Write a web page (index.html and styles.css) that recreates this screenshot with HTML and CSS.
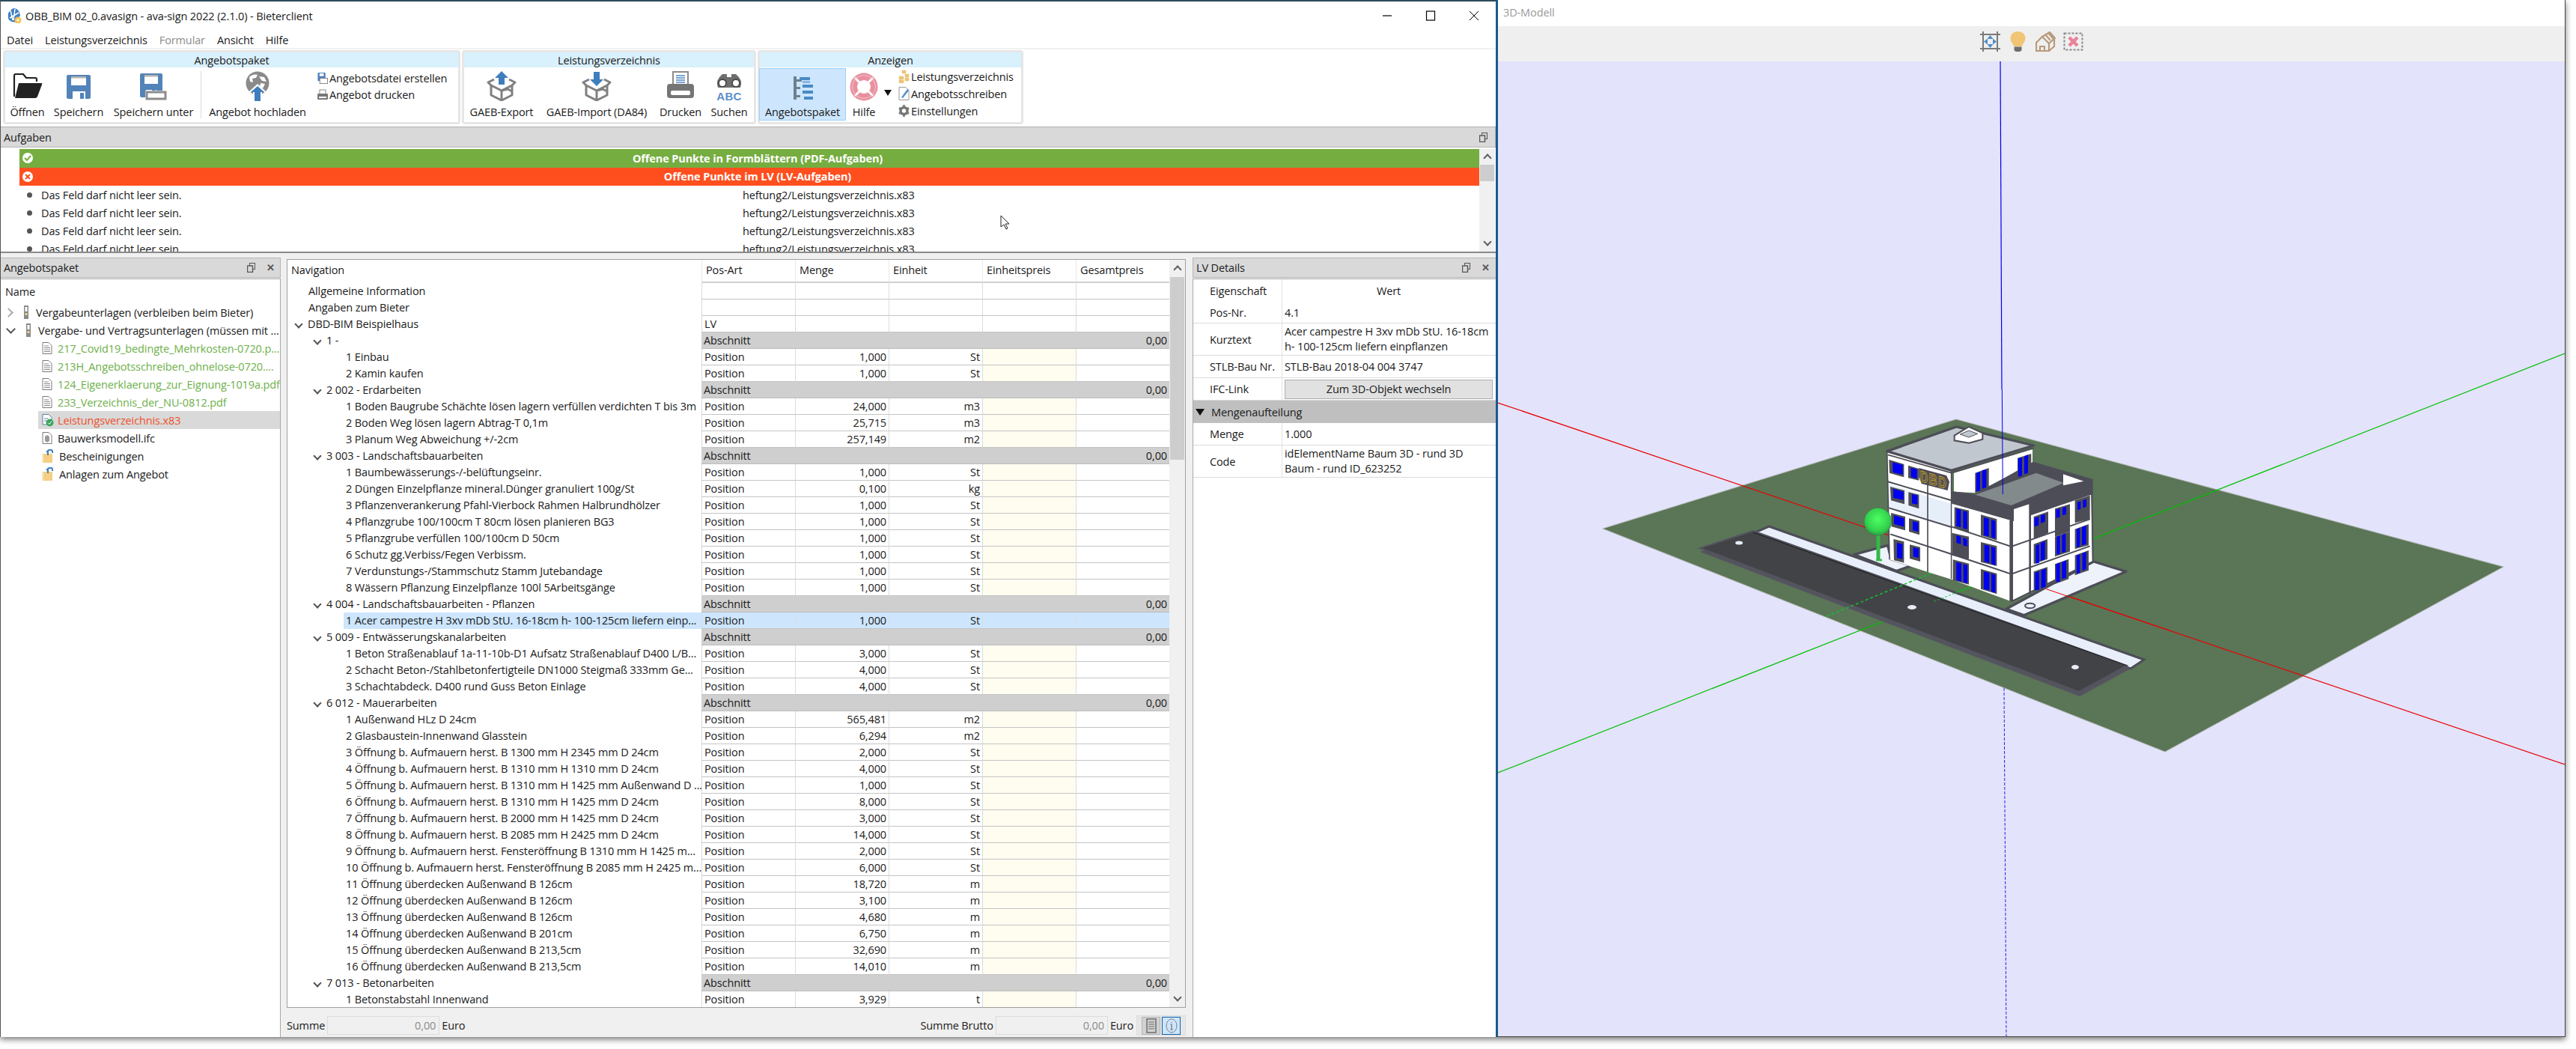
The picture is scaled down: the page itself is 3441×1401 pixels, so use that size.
FILE: index.html
```html
<!DOCTYPE html>
<html lang="de">
<head>
<meta charset="utf-8">
<title>OBB_BIM 02_0.avasign - ava-sign 2022 (2.1.0) - Bieterclient</title>
<link rel="stylesheet" href="styles.css">
</head>
<body>
<svg class="defs" width="0" height="0">
  <symbol id="save" viewBox="0 0 32 32"><path d="M2 0h28q2 0 2 2v28q0 2-2 2H2q-2 0-2-2V2q0-2 2-2z" fill="#5283b9"/><rect x="6" y="2" width="20" height="12" fill="#fff"/><rect x="6" y="2" width="20" height="2.5" fill="#b3b3b3"/><rect x="8" y="22" width="17" height="10" fill="#fff"/><rect x="18" y="24" width="5" height="8" fill="#5283b9"/></symbol>
  <symbol id="saveas" viewBox="0 0 36 36"><path d="M2 0h26q2 0 2 2v28q0 2-2 2H2q-2 0-2-2V2q0-2 2-2z" fill="#5283b9"/><rect x="6" y="2" width="18" height="12" fill="#fff"/><rect x="6" y="2" width="18" height="2.5" fill="#b3b3b3"/><rect x="8" y="22" width="14" height="10" fill="#fff"/><rect x="16" y="22" width="5" height="3" fill="#5283b9"/><rect x="7" y="23" width="29" height="13" fill="#fff"/><rect x="9" y="25" width="25" height="9" fill="#fff" stroke="#8c8c8c" stroke-width="3"/></symbol>
  <symbol id="box" viewBox="0 0 40 40"><g fill="none" stroke="#808080" stroke-width="3" stroke-linejoin="round"><path d="M6 19l14 7 14-7v13l-14 7-14-7z"/><path d="M20 26v13M6 19l-4-4 8-4M34 19l4-4-8-4M20 26l8-2 6 3"/></g></symbol>
  <symbol id="print" viewBox="0 0 38 38"><rect x="9" y="1" width="20" height="20" fill="#fff" stroke="#8c8c8c" stroke-width="2"/><path d="M13 6h12M13 9h12M13 12h12M13 15h12" stroke="#4d86c1" stroke-width="1.5"/><rect x="1" y="17" width="36" height="19" rx="4" fill="#757575"/><rect x="6" y="26" width="26" height="6" rx="2" fill="#fff"/></symbol>
  <symbol id="pdoc" viewBox="0 0 14 16"><path d="M1 .5h8l4 4V15.500H1z" fill="#fff" stroke="#7a7a7a"/><path d="M3 5h6M3 7.500h8M3 10h8M3 12.500h8" stroke="#8a8a8a"/></symbol>
  <symbol id="fold" viewBox="0 0 16 18"><path d="M0 6h6l1-2v2h7v12H0z" fill="#f5cf86"/><path d="M0 6v12h2V7z" fill="#fbe7bd"/><path d="M8 8V3q0-2 2-2h2q2 0 2 2v2" fill="none" stroke="#3f7ec0" stroke-width="2"/><path d="M5 3l4-2v5z" fill="#3f7ec0"/></symbol>
  <symbol id="bar" viewBox="0 0 8 18"><rect x="1" y="0" width="6" height="18" fill="#8a8a8a"/><rect x="2.500" y="2" width="3" height="6" fill="#fff"/><rect x="2.500" y="10" width="3" height="3" fill="#e7d58a"/></symbol>
  <symbol id="ssave" viewBox="0 0 14 16"><rect x="0" y="0" width="11" height="12" rx="1" fill="#4f81bd"/><rect x="2.500" y="1" width="6" height="4" fill="#fff"/><rect x="3" y="8" width="11" height="7.500" fill="#fff" stroke="#808080"/></symbol>
  <symbol id="undock" viewBox="0 0 11 13"><rect x="3.500" y=".5" width="7" height="8" fill="none" stroke="#555"/><rect x=".5" y="4" width="7" height="8.500" fill="#d9d9d9" stroke="#555" stroke-width="1.400"/></symbol>
</svg>
<div class="window">
  <div class="app">
    <header class="titlebar">
      <svg class="appicon" viewBox="0 0 20 20"><path d="M2 14Q0 4 9 0q7 0 9 9l-4 9q-8 2-12-4z" fill="#3f7fc4"/><path d="M5 3l3 13M11 1l-2 15M16 6L4 13" stroke="#fff" stroke-width="1.500"/><circle cx="15" cy="16" r="4.500" fill="#f2c14a"/><path d="M15 13.500v5M12.500 16h5" stroke="#fff"/></svg>
      <span class="title">OBB_BIM 02_0.avasign - ava-sign 2022 (2.1.0) - Bieterclient</span>
      <div class="winctl">
        <span class="wc"><svg width="14" height="14" viewBox="0 0 14 14"><path d="M1 7h12" stroke="#000" stroke-width="1.200"/></svg></span>
        <span class="wc"><svg width="14" height="14" viewBox="0 0 14 14"><rect x="1.500" y="1" width="11" height="12" fill="none" stroke="#000" stroke-width="1.200"/></svg></span>
        <span class="wc"><svg width="14" height="14" viewBox="0 0 14 14"><path d="M1 1l12 12M13 1L1 13" stroke="#000" stroke-width="1"/></svg></span>
      </div>
    </header>
    <nav class="menubar"><span>Datei</span><span>Leistungsverzeichnis</span><span class="off">Formular</span><span>Ansicht</span><span>Hilfe</span></nav>
    <section class="ribbon">
      <div class="group g1">
        <div class="ghead">Angebotspaket</div>
        <div class="gbody">
          <div class="btn w-open">
            <svg class="ic" width="40" height="34" viewBox="0 0 40 34"><path d="M2 31V3q0-2 2-2h10l4 5h12q2 0 2 2v3" fill="none" stroke="#222" stroke-width="2.200"/><path d="M8 13h30q2 0 1 2l-6 16q-1 2-3 2H3z" fill="#222"/></svg>
            <span>Öffnen</span>
          </div>
          <div class="btn w-save"><svg class="ic" width="32" height="32"><use href="#save"/></svg><span>Speichern</span></div>
          <div class="btn w-saveas"><svg class="ic" width="36" height="36"><use href="#saveas"/></svg><span>Speichern unter</span></div>
          <div class="sep"></div>
          <div class="btn w-upload">
            <svg class="ic" width="34" height="40" viewBox="0 0 34 40"><circle cx="17" cy="16" r="15.500" fill="#8a8a8a"/><path d="M6 8q5-5 11-3l-2 4-5 1 1 5-4-1zM19 7l7 1 3 6-6-1zM21 16l6 1-3 6-4-2z" fill="#fff"/><path d="M17 17l12 11h-6v12H11V28H5z" fill="#fff"/><path d="M17 20l9 8h-5v12h-8V28H8z" fill="#3f7ebc"/></svg>
            <span>Angebot hochladen</span>
          </div>
          <div class="small s1">
            <div class="si"><svg width="14" height="15"><use href="#ssave"/></svg><span>Angebotsdatei erstellen</span></div>
            <div class="si"><svg width="14" height="15" viewBox="0 0 14 15"><rect x="3" y="1" width="8" height="6" fill="#fff" stroke="#888"/><rect x="0" y="6" width="14" height="8" rx="1" fill="#777"/><rect x="2" y="10" width="10" height="2" fill="#fff"/></svg><span>Angebot drucken</span></div>
          </div>
        </div>
      </div>
      <div class="group g2">
        <div class="ghead">Leistungsverzeichnis</div>
        <div class="gbody">
          <div class="btn w-gexp"><svg class="ic" width="40" height="40" viewBox="0 0 40 40"><use href="#box"/><path d="M20 0l9 9h-5v9h-8V9h-5z" fill="#3f7ebc"/></svg><span>GAEB-Export</span></div>
          <div class="btn w-gimp"><svg class="ic" width="40" height="40" viewBox="0 0 40 40"><use href="#box"/><path d="M20 20l9-9h-5V1h-8v10h-5z" fill="#3f7ebc"/></svg><span>GAEB-Import (DA84)</span></div>
          <div class="btn w-druck"><svg class="ic" width="38" height="38"><use href="#print"/></svg><span>Drucken</span></div>
          <div class="btn w-such"><svg class="ic" width="38" height="40" viewBox="0 0 38 40"><path d="M4 22q-4-10 6-18h6v4h6V4h6q10 8 6 18z" fill="#6e6e6e"/><circle cx="10" cy="16" r="5" fill="#fff" stroke="#4a4a4a" stroke-width="2"/><circle cx="28" cy="16" r="5" fill="#fff" stroke="#4a4a4a" stroke-width="2"/><text x="19" y="39" class="abc">ABC</text></svg><span>Suchen</span></div>
        </div>
      </div>
      <div class="group g3">
        <div class="ghead">Anzeigen</div>
        <div class="gbody">
          <div class="btn active">
            <svg class="ic" width="30" height="32" viewBox="0 0 30 32"><path d="M3 1h4v31H3zM7 5h7v3H7zM7 15h5v3H7zM7 26h5v3H7z" fill="#6f7f8f"/><path d="M11 2h14v4H11zM15 12h14v4H15zM15 20h14v4H15zM17 28h12v4H17z" fill="#4a8ac6"/><path d="M15 7h10v3H15z" fill="#86b4de"/></svg>
            <span>Angebotspaket</span>
          </div>
          <div class="btn w-hilfe">
            <svg class="ic" width="38" height="38" viewBox="0 0 38 38"><circle cx="19" cy="19" r="18.500" fill="#e9909f"/><circle cx="19" cy="19" r="9" fill="#fff"/><path d="M7 7l7 7M31 7l-7 7M7 31l7-7M31 31l-7-7" stroke="#fff" stroke-width="3"/><circle cx="19" cy="19" r="15.500" fill="none" stroke="#f4c3cc" stroke-width="1"/></svg>
            <span>Hilfe</span>
          </div>
          <div class="caret"></div>
          <div class="small s3">
            <div class="si"><svg width="15" height="18" viewBox="0 0 15 18"><g fill="#f1c77a" stroke="#d9a953" stroke-width=".5"><rect x="5" y="1" width="5" height="4" rx="1"/><rect x="9" y="6" width="5" height="4" rx="1"/><rect x="1" y="9" width="6" height="4" rx="1"/><rect x="9" y="11" width="5" height="4" rx="1"/><rect x="1" y="14" width="6" height="4" rx="1"/></g></svg><span>Leistungsverzeichnis</span></div>
            <div class="si"><svg width="15" height="18" viewBox="0 0 15 18"><path d="M1 .5h9l4 4v13H1z" fill="#fff" stroke="#9a9a9a"/><path d="M4 14L12 3l2 2-8 10z" fill="#4f8dcb"/></svg><span>Angebotsschreiben</span></div>
            <div class="si"><svg width="15" height="18" viewBox="0 0 15 18"><circle cx="7.500" cy="9" r="4.500" fill="none" stroke="#767676" stroke-width="3.500"/><path d="M7.500 1v3M7.500 14v3M1 5l2.500 2M14 5l-2.500 2M1 13l2.500-2M14 13l-2.500-2" stroke="#767676" stroke-width="2.500"/></svg><span>Einstellungen</span></div>
          </div>
        </div>
      </div>
    </section>
    <section class="tasks">
      <div class="phead"><span>Aufgaben</span><div class="pctl"><svg class="undock" width="11" height="13"><use href="#undock"/></svg></div></div>
      <div class="tbody">
        <div class="tlist">
          <div class="bar green"><svg class="bi" width="16" height="16" viewBox="0 0 16 16"><circle cx="8" cy="8" r="7" fill="#fff"/><path d="M4 8l3 3 5-6" fill="none" stroke="#76ad41" stroke-width="2"/></svg><b>Offene Punkte in Formblättern (PDF-Aufgaben)</b></div>
          <div class="bar red"><svg class="bi" width="16" height="16" viewBox="0 0 16 16"><circle cx="8" cy="8" r="7" fill="#fff"/><path d="M5 5l6 6M11 5l-6 6" stroke="#ff4f1f" stroke-width="2"/></svg><b>Offene Punkte im LV (LV-Aufgaben)</b></div>
          <div class="task"><i></i><span class="tm">Das Feld darf nicht leer sein.</span><span>heftung2/Leistungsverzeichnis.x83</span></div>
          <div class="task"><i></i><span class="tm">Das Feld darf nicht leer sein.</span><span>heftung2/Leistungsverzeichnis.x83</span></div>
          <div class="task"><i></i><span class="tm">Das Feld darf nicht leer sein.</span><span>heftung2/Leistungsverzeichnis.x83</span></div>
          <div class="task"><i></i><span class="tm">Das Feld darf nicht leer sein.</span><span>heftung2/Leistungsverzeichnis.x83</span></div>
          <svg class="cursor" width="13" height="20" viewBox="0 0 13 20"><path d="M1 1v15l4-3 3 6 2-1-3-6h5z" fill="#fff" stroke="#222"/></svg>
        </div>
        <div class="tscroll"><span class="up"></span><span class="thumb"></span><span class="dn"></span></div>
      </div>
    </section>
    <main class="body">
      <aside class="leftp">
        <div class="phead"><span>Angebotspaket</span><div class="pctl"><svg class="undock" width="11" height="13"><use href="#undock"/></svg><span class="x">✕</span></div></div>
        <div class="tree">
          <div class="tname">Name</div>
          <div class="ti t0"><i class="chev col"></i><svg width="8" height="18"><use href="#bar"/></svg><span>Vergabeunterlagen (verbleiben beim Bieter)</span></div>
          <div class="ti t0"><i class="chev"></i><svg width="8" height="18"><use href="#bar"/></svg><span>Vergabe- und Vertragsunterlagen (müssen mit ...</span></div>
          <div class="ti t1 gn"><svg width="14" height="16"><use href="#pdoc"/></svg><span>217_Covid19_bedingte_Mehrkosten-0720.p...</span></div>
          <div class="ti t1 gn"><svg width="14" height="16"><use href="#pdoc"/></svg><span>213H_Angebotsschreiben_ohnelose-0720....</span></div>
          <div class="ti t1 gn"><svg width="14" height="16"><use href="#pdoc"/></svg><span>124_Eigenerklaerung_zur_Eignung-1019a.pdf</span></div>
          <div class="ti t1 gn"><svg width="14" height="16"><use href="#pdoc"/></svg><span>233_Verzeichnis_der_NU-0812.pdf</span></div>
          <div class="ti t1 rd"><svg width="16" height="17" viewBox="0 0 16 17"><path d="M1 .5h8l4 4V14H1z" fill="#fff" stroke="#5c7fa8"/><path d="M3 6h5M3 9h3" stroke="#5c7fa8"/><circle cx="10.500" cy="11.500" r="5" fill="#3ba55d"/><path d="M8 11.500l2 2 3-4" fill="none" stroke="#fff"/></svg><span>Leistungsverzeichnis.x83</span></div>
          <div class="ti t1"><svg width="14" height="16" viewBox="0 0 14 16"><path d="M1 .5h8l4 4v11H1z" fill="#fff" stroke="#7a7a7a"/><path d="M4 6l3-2 3 2v6l-3 2-3-2z" fill="#9a9a9a"/></svg><span>Bauwerksmodell.ifc</span></div>
          <div class="ti t1"><svg width="16" height="18"><use href="#fold"/></svg><span>Bescheinigungen</span></div>
          <div class="ti t1"><svg width="16" height="18"><use href="#fold"/></svg><span>Anlagen zum Angebot</span></div>
        </div>
      </aside>
      <section class="centerp">
        <div class="lvtable">
          <div class="lvmain">
            <div class="r hd"><div class="n">Navigation</div><div class="c">Pos-Art</div><div class="c">Menge</div><div class="c">Einheit</div><div class="c">Einheitspreis</div><div class="c">Gesamtpreis</div></div>
            <div class="r"><div class="n l0">Allgemeine Information</div><div class="c"></div><div class="c"></div><div class="c"></div><div class="c"></div><div class="c"></div></div>
            <div class="r"><div class="n l0">Angaben zum Bieter</div><div class="c"></div><div class="c"></div><div class="c"></div><div class="c"></div><div class="c"></div></div>
            <div class="r"><div class="n l0"><i class="chev"></i>DBD-BIM Beispielhaus</div><div class="c">LV</div><div class="c"></div><div class="c"></div><div class="c"></div><div class="c"></div></div>
            <div class="r sec"><div class="n l1"><i class="chev"></i>1 -</div><div class="c">Abschnitt</div><div class="c"></div><div class="c"></div><div class="c"></div><div class="c num">0,00</div></div>
            <div class="r"><div class="n l2">1 Einbau</div><div class="c">Position</div><div class="c num">1,000</div><div class="c num">St</div><div class="c price"></div><div class="c"></div></div>
            <div class="r"><div class="n l2">2 Kamin kaufen</div><div class="c">Position</div><div class="c num">1,000</div><div class="c num">St</div><div class="c price"></div><div class="c"></div></div>
            <div class="r sec"><div class="n l1"><i class="chev"></i>2 002 - Erdarbeiten</div><div class="c">Abschnitt</div><div class="c"></div><div class="c"></div><div class="c"></div><div class="c num">0,00</div></div>
            <div class="r"><div class="n l2">1 Boden Baugrube Schächte lösen lagern verfüllen verdichten T bis 3m</div><div class="c">Position</div><div class="c num">24,000</div><div class="c num">m3</div><div class="c price"></div><div class="c"></div></div>
            <div class="r"><div class="n l2">2 Boden Weg lösen lagern Abtrag-T 0,1m</div><div class="c">Position</div><div class="c num">25,715</div><div class="c num">m3</div><div class="c price"></div><div class="c"></div></div>
            <div class="r"><div class="n l2">3 Planum Weg Abweichung +/-2cm</div><div class="c">Position</div><div class="c num">257,149</div><div class="c num">m2</div><div class="c price"></div><div class="c"></div></div>
            <div class="r sec"><div class="n l1"><i class="chev"></i>3 003 - Landschaftsbauarbeiten</div><div class="c">Abschnitt</div><div class="c"></div><div class="c"></div><div class="c"></div><div class="c num">0,00</div></div>
            <div class="r"><div class="n l2">1 Baumbewässerungs-/-belüftungseinr.</div><div class="c">Position</div><div class="c num">1,000</div><div class="c num">St</div><div class="c price"></div><div class="c"></div></div>
            <div class="r"><div class="n l2">2 Düngen Einzelpflanze mineral.Dünger granuliert 100g/St</div><div class="c">Position</div><div class="c num">0,100</div><div class="c num">kg</div><div class="c price"></div><div class="c"></div></div>
            <div class="r"><div class="n l2">3 Pflanzenverankerung Pfahl-Vierbock Rahmen Halbrundhölzer</div><div class="c">Position</div><div class="c num">1,000</div><div class="c num">St</div><div class="c price"></div><div class="c"></div></div>
            <div class="r"><div class="n l2">4 Pflanzgrube 100/100cm T 80cm lösen planieren BG3</div><div class="c">Position</div><div class="c num">1,000</div><div class="c num">St</div><div class="c price"></div><div class="c"></div></div>
            <div class="r"><div class="n l2">5 Pflanzgrube verfüllen 100/100cm D 50cm</div><div class="c">Position</div><div class="c num">1,000</div><div class="c num">St</div><div class="c price"></div><div class="c"></div></div>
            <div class="r"><div class="n l2">6 Schutz gg.Verbiss/Fegen Verbissm.</div><div class="c">Position</div><div class="c num">1,000</div><div class="c num">St</div><div class="c price"></div><div class="c"></div></div>
            <div class="r"><div class="n l2">7 Verdunstungs-/Stammschutz Stamm Jutebandage</div><div class="c">Position</div><div class="c num">1,000</div><div class="c num">St</div><div class="c price"></div><div class="c"></div></div>
            <div class="r"><div class="n l2">8 Wässern Pflanzung Einzelpflanze 100l 5Arbeitsgänge</div><div class="c">Position</div><div class="c num">1,000</div><div class="c num">St</div><div class="c price"></div><div class="c"></div></div>
            <div class="r sec"><div class="n l1"><i class="chev"></i>4 004 - Landschaftsbauarbeiten - Pflanzen</div><div class="c">Abschnitt</div><div class="c"></div><div class="c"></div><div class="c"></div><div class="c num">0,00</div></div>
            <div class="r sel"><div class="n l2">1 Acer campestre H 3xv mDb StU. 16-18cm h- 100-125cm liefern einp...</div><div class="c">Position</div><div class="c num">1,000</div><div class="c num">St</div><div class="c"></div><div class="c"></div></div>
            <div class="r sec"><div class="n l1"><i class="chev"></i>5 009 - Entwässerungskanalarbeiten</div><div class="c">Abschnitt</div><div class="c"></div><div class="c"></div><div class="c"></div><div class="c num">0,00</div></div>
            <div class="r"><div class="n l2">1 Beton Straßenablauf 1a-11-10b-D1 Aufsatz Straßenablauf D400 L/B...</div><div class="c">Position</div><div class="c num">3,000</div><div class="c num">St</div><div class="c price"></div><div class="c"></div></div>
            <div class="r"><div class="n l2">2 Schacht Beton-/Stahlbetonfertigteile DN1000 Steigmaß 333mm Ge...</div><div class="c">Position</div><div class="c num">4,000</div><div class="c num">St</div><div class="c price"></div><div class="c"></div></div>
            <div class="r"><div class="n l2">3 Schachtabdeck. D400 rund Guss Beton Einlage</div><div class="c">Position</div><div class="c num">4,000</div><div class="c num">St</div><div class="c price"></div><div class="c"></div></div>
            <div class="r sec"><div class="n l1"><i class="chev"></i>6 012 - Mauerarbeiten</div><div class="c">Abschnitt</div><div class="c"></div><div class="c"></div><div class="c"></div><div class="c num">0,00</div></div>
            <div class="r"><div class="n l2">1 Außenwand HLz D 24cm</div><div class="c">Position</div><div class="c num">565,481</div><div class="c num">m2</div><div class="c price"></div><div class="c"></div></div>
            <div class="r"><div class="n l2">2 Glasbaustein-Innenwand Glasstein</div><div class="c">Position</div><div class="c num">6,294</div><div class="c num">m2</div><div class="c price"></div><div class="c"></div></div>
            <div class="r"><div class="n l2">3 Öffnung b. Aufmauern herst. B 1300 mm H 2345 mm D 24cm</div><div class="c">Position</div><div class="c num">2,000</div><div class="c num">St</div><div class="c price"></div><div class="c"></div></div>
            <div class="r"><div class="n l2">4 Öffnung b. Aufmauern herst. B 1310 mm H 1310 mm D 24cm</div><div class="c">Position</div><div class="c num">4,000</div><div class="c num">St</div><div class="c price"></div><div class="c"></div></div>
            <div class="r"><div class="n l2">5 Öffnung b. Aufmauern herst. B 1310 mm H 1425 mm Außenwand D ...</div><div class="c">Position</div><div class="c num">1,000</div><div class="c num">St</div><div class="c price"></div><div class="c"></div></div>
            <div class="r"><div class="n l2">6 Öffnung b. Aufmauern herst. B 1310 mm H 1425 mm D 24cm</div><div class="c">Position</div><div class="c num">8,000</div><div class="c num">St</div><div class="c price"></div><div class="c"></div></div>
            <div class="r"><div class="n l2">7 Öffnung b. Aufmauern herst. B 2000 mm H 1425 mm D 24cm</div><div class="c">Position</div><div class="c num">3,000</div><div class="c num">St</div><div class="c price"></div><div class="c"></div></div>
            <div class="r"><div class="n l2">8 Öffnung b. Aufmauern herst. B 2085 mm H 2425 mm D 24cm</div><div class="c">Position</div><div class="c num">14,000</div><div class="c num">St</div><div class="c price"></div><div class="c"></div></div>
            <div class="r"><div class="n l2">9 Öffnung b. Aufmauern herst. Fensteröffnung B 1310 mm H 1425 m...</div><div class="c">Position</div><div class="c num">2,000</div><div class="c num">St</div><div class="c price"></div><div class="c"></div></div>
            <div class="r"><div class="n l2">10 Öffnung b. Aufmauern herst. Fensteröffnung B 2085 mm H 2425 m...</div><div class="c">Position</div><div class="c num">6,000</div><div class="c num">St</div><div class="c price"></div><div class="c"></div></div>
            <div class="r"><div class="n l2">11 Öffnung überdecken Außenwand B 126cm</div><div class="c">Position</div><div class="c num">18,720</div><div class="c num">m</div><div class="c price"></div><div class="c"></div></div>
            <div class="r"><div class="n l2">12 Öffnung überdecken Außenwand B 126cm</div><div class="c">Position</div><div class="c num">3,100</div><div class="c num">m</div><div class="c price"></div><div class="c"></div></div>
            <div class="r"><div class="n l2">13 Öffnung überdecken Außenwand B 126cm</div><div class="c">Position</div><div class="c num">4,680</div><div class="c num">m</div><div class="c price"></div><div class="c"></div></div>
            <div class="r"><div class="n l2">14 Öffnung überdecken Außenwand B 201cm</div><div class="c">Position</div><div class="c num">6,750</div><div class="c num">m</div><div class="c price"></div><div class="c"></div></div>
            <div class="r"><div class="n l2">15 Öffnung überdecken Außenwand B 213,5cm</div><div class="c">Position</div><div class="c num">32,690</div><div class="c num">m</div><div class="c price"></div><div class="c"></div></div>
            <div class="r"><div class="n l2">16 Öffnung überdecken Außenwand B 213,5cm</div><div class="c">Position</div><div class="c num">14,010</div><div class="c num">m</div><div class="c price"></div><div class="c"></div></div>
            <div class="r sec"><div class="n l1"><i class="chev"></i>7 013 - Betonarbeiten</div><div class="c">Abschnitt</div><div class="c"></div><div class="c"></div><div class="c"></div><div class="c num">0,00</div></div>
            <div class="r"><div class="n l2">1 Betonstabstahl Innenwand</div><div class="c">Position</div><div class="c num">3,929</div><div class="c num">t</div><div class="c price"></div><div class="c"></div></div>
          </div>
          <div class="lvscroll"><span class="up"></span><span class="thumb"></span><span class="dn"></span></div>
        </div>
        <div class="lvfoot">
          <span>Summe</span><span class="inp">0,00</span><span>Euro</span>
          <span class="spring"></span>
          <span>Summe Brutto</span><span class="inp">0,00</span><span>Euro</span>
          <div class="vtog">
            <span class="vb"><svg width="14" height="20" viewBox="0 0 14 20"><rect x="1" y="1" width="12" height="18" fill="none" stroke="#6d6d6d" stroke-width="1.500"/><path d="M3 5h8M3 8h8M3 11h8M3 14h8" stroke="#6d6d6d"/></svg></span>
            <span class="vb on"><svg width="16" height="20" viewBox="0 0 16 20"><ellipse cx="8" cy="10" rx="7" ry="9" fill="none" stroke="#808080"/><path d="M8 5v1M8 8v7M6.500 8H8M6.500 15h3" stroke="#808080" stroke-width="1.400"/></svg></span>
          </div>
        </div>
      </section>
      <aside class="rightp">
        <div class="phead"><span>LV Details</span><div class="pctl"><svg class="undock" width="11" height="13"><use href="#undock"/></svg><span class="x">✕</span></div></div>
        <div class="details">
          <div class="dr dh"><div class="dk">Eigenschaft</div><div class="dv ctr">Wert</div></div>
          <div class="dr h-s"><div class="dk">Pos-Nr.</div><div class="dv">4.1</div></div>
          <div class="dr h-d"><div class="dk">Kurztext</div><div class="dv">Acer campestre H 3xv mDb StU. 16-18cm h- 100-125cm liefern einpflanzen</div></div>
          <div class="dr h-m"><div class="dk">STLB-Bau Nr.</div><div class="dv">STLB-Bau 2018-04 004 3747</div></div>
          <div class="dr h-m"><div class="dk">IFC-Link</div><div class="dv"><span class="dbtn">Zum 3D-Objekt wechseln</span></div></div>
          <div class="dsec"><i></i>Mengenaufteilung</div>
          <div class="dr h-m"><div class="dk">Menge</div><div class="dv">1.000</div></div>
          <div class="dr h-d"><div class="dk">Code</div><div class="dv">idElementName Baum 3D - rund 3D Baum - rund ID_623252</div></div>
        </div>
      </aside>
    </main>
  </div>
  <div class="viewer">
    <div class="vtitle">3D-Modell</div>
    <div class="vtools">
      <svg width="27" height="27" viewBox="0 0 27 27"><path d="M4 0v27M23 0v27M0 4h27M0 23h27" stroke="#7a7a7a" stroke-width="2"/><path d="M13.500 5l4 5h-8zM13.500 22l-4-5h8zM5 13.500l5-4v8zM22 13.500l-5 4v-8z" fill="#4f8dcb"/></svg>
      <svg width="27" height="27" viewBox="0 0 27 27"><path d="M13.500 0C6 0 3.500 5.500 3.500 9.500c0 4.500 4 7 4.500 10.500h11c.5-3.500 4.500-6 4.500-10.500C23.500 5.500 21 0 13.500 0z" fill="#f0c676"/><path d="M8.500 20.500h10V25q-1 2-5 2t-5-2z" fill="#6d6d6d"/></svg>
      <svg width="27" height="27" viewBox="0 0 27 27"><g fill="none" stroke="#b89a7c" stroke-width="2.200" stroke-linejoin="round"><path d="M1 26V15l8-8 9 9v10H1z"/><path d="M9 7l10-6 7 8-8 7M13 4l7 8M17 2l7 8M18 26l7-6V9"/><path d="M6 26v-6h6v6"/></g></svg>
      <svg width="27" height="27" viewBox="0 0 27 27"><rect x="1.500" y="2.500" width="24" height="22" fill="none" stroke="#8a8a8a" stroke-width="2" stroke-dasharray="3 2"/><path d="M8 8l11 11M19 8L8 19" stroke="#e9829a" stroke-width="4.500"/></svg>
    </div>
    <svg class="scene" width="1425" height="1302" viewBox="2001 82 1425 1302">
      <defs>
        <radialGradient id="leaf" cx=".5" cy=".42" r=".6"><stop offset="0" stop-color="#4cff60"/><stop offset=".7" stop-color="#33d24e"/><stop offset="1" stop-color="#2a9a42"/></radialGradient>
      </defs>
      <polygon points="2141,706 2613,560 3344,757 2892,1004" fill="#5b7557" stroke="#a9b2a6"/>
      <path d="M2001 538L3426 1021" stroke="#e80000" stroke-width="1.200"/>
      <path d="M2001 1032L3426 472" stroke="#00c000" stroke-width="1.200"/>
      <path d="M2677 919L2680 1384" stroke="#2424e8" stroke-width="1" stroke-dasharray="4 2"/>
      <polygon points="2363,703 2864,881 2846,893 2342,712" fill="#e8effb" stroke="#4d4d57" stroke-width="3"/>
      <polygon points="2271,737 2778,930 2846,893 2342,712" fill="#54545f"/>
      <polygon points="2271,732 2777,924 2841,889 2342,709" fill="#424347" stroke="#54545f" stroke-width="2"/>
      <path d="M2342 711L2841 889" stroke="#222" stroke-width="1.200"/>
      <ellipse cx="2323" cy="725" rx="5" ry="2.500" fill="#e6ebf5"/>
      <ellipse cx="2554" cy="811" rx="6" ry="3" fill="#e6ebf5"/>
      <ellipse cx="2772" cy="891" rx="5" ry="3" fill="#e6ebf5"/>
      <path d="M2440 823L2632 744" stroke="#12c030" stroke-width="1.500" stroke-dasharray="4 3"/>
      <g transform="translate(2400 520) scale(.33333)">
        <g stroke="#4d4d57" stroke-width="10" stroke-linejoin="round">
          <polygon points="230,662 365,625 378,680 460,706 400,728" fill="#edf2fb"/>
          <polygon points="840,880 1190,690 1320,730 910,905" fill="#edf2fb"/>
        </g>
        <ellipse cx="935" cy="867" rx="20" ry="10" fill="#edf2fb" stroke="#4d4d57" stroke-width="6"/>
        <path d="M1000 800L1500 968" stroke="#e80000" stroke-width="3"/>
        <path d="M550 850L700 790" stroke="#12c030" stroke-width="3" stroke-dasharray="8 8"/>
        <polygon points="362,250 620,325 622,762 528,733 372,682" fill="#fff"/>
        <polygon points="368,378 525,430 525,525 368,478" fill="#eaf0fa"/>
        <polygon points="525,430 620,458 620,550 525,525" fill="#e6eefa"/>
        <path d="M365 370L620 445M370 475L620 552M375 580L620 660" stroke="#4d4d57" stroke-width="6" fill="none"/>
        <path d="M525 330V732M620 325V760M362 250L372 682" stroke="#4d4d57" stroke-width="5" fill="none"/>
        <polygon points="622,455 860,525 860,850 622,762" fill="#fff"/>
        <polygon points="860,525 1180,415 1185,690 860,850" fill="#fff"/>
        <polygon points="630,335 945,240 945,300 715,415 630,410" fill="#fff"/>
        <polygon points="362,248 640,150 950,225 620,325" fill="#c1c7cf" stroke="#4d4d57" stroke-width="10" stroke-linejoin="round"/>
        <path d="M365 262L620 335 950 235" fill="none" stroke="#4d4d57" stroke-width="5"/>
        <polygon points="632,185 690,150 745,175 745,200 690,215 632,205" fill="#fff" stroke="#4d4d57" stroke-width="6"/>
        <polygon points="655,180 690,165 725,178 690,192" fill="#c1c7cf" stroke="#4d4d57" stroke-width="3"/>
        <polygon points="948,290 1187,360 1187,420 870,528 622,458 622,408 715,420" fill="#4d4d57"/>
        <polygon points="715,422 960,335 1070,375 860,465" fill="#828a8c"/>
        <polygon points="1068,340 1150,368 1068,385" fill="#fff"/>
        <polygon points="870,480 932,460 935,520 870,530" fill="#fff"/>
        <polygon points="490,315 600,345 612,370 605,405 500,378 490,350" fill="#4d4d57"/>
        <text class="sign" transform="translate(494 368) skewY(16) scale(.72 1)">DBD</text>
        <path d="M620 550L860 630 1175 520M620 660L860 740 1175 628" fill="none" stroke="#4d4d57" stroke-width="6"/>
        <path d="M860 525V850" stroke="#4d4d57" stroke-width="14"/>
        <path d="M935 460V820" stroke="#4d4d57" stroke-width="8"/>
        <path d="M1183 415L1187 690 860 850" fill="none" stroke="#4d4d57" stroke-width="6"/>
        <g fill="#4d4d57">
          <polygon points="370,282 430,300 430,352 372,335"/><polygon points="447,305 490,318 490,365 447,355"/>
          <polygon points="375,390 432,405 432,460 378,445"/><polygon points="448,412 490,422 490,478 448,465"/>
          <polygon points="378,495 435,510 435,565 380,550"/><polygon points="450,517 492,527 492,583 450,570"/>
          <polygon points="388,600 430,610 430,695 390,685"/><polygon points="453,622 495,632 495,690 453,678"/>
          <polygon points="632,472 690,485 690,575 632,555"/><polygon points="738,502 802,520 802,605 738,585"/>
          <polygon points="622,575 690,590 690,680 622,665"/><polygon points="738,612 802,628 802,708 738,692"/>
          <polygon points="626,682 690,698 690,782 626,765"/><polygon points="738,720 802,738 802,820 738,800"/>
          <polygon points="950,510 1008,490 1008,575 950,600"/><polygon points="950,620 1005,600 1005,680 950,700"/>
          <polygon points="950,730 1005,712 1005,790 950,810"/>
          <polygon points="1035,478 1095,460 1095,570 1035,590"/><polygon points="1035,590 1095,570 1095,650 1035,670"/>
          <polygon points="1035,700 1090,680 1090,760 1035,780"/>
          <polygon points="1115,445 1175,425 1175,520 1115,535"/><polygon points="1115,560 1170,540 1170,625 1115,640"/>
          <polygon points="1115,665 1170,645 1170,725 1115,745"/>
          <polygon points="715,335 770,315 770,395 715,415"/><polygon points="885,275 940,258 940,335 885,352"/>
        </g>
        <g fill="#0000f0">
          <polygon points="385,292 425,303 425,342 385,332"/><polygon points="458,314 482,320 482,358 458,352"/>
          <polygon points="387,398 428,410 428,443 387,435"/><polygon points="462,420 484,425 484,462 462,457"/>
          <polygon points="390,505 430,517 430,550 390,540"/><polygon points="465,528 487,533 487,570 465,565"/>
          <polygon points="402,615 424,620 424,680 402,675"/><polygon points="467,633 489,638 489,675 467,670"/>
          <polygon points="640,478 658,483 658,552 640,548"/><polygon points="667,487 683,490 683,560 667,557"/>
          <polygon points="750,513 770,518 770,590 750,585"/><polygon points="780,522 796,527 796,598 780,593"/>
          <polygon points="640,585 658,590 658,620 640,615"/><polygon points="667,595 683,600 683,630 667,625"/>
          <polygon points="752,622 772,627 772,695 752,690"/><polygon points="780,630 796,635 796,705 780,700"/>
          <polygon points="640,692 660,697 660,770 640,765"/><polygon points="668,700 684,705 684,778 668,773"/>
          <polygon points="750,730 772,735 772,805 750,800"/><polygon points="780,738 796,743 796,815 780,810"/>
          <polygon points="953,515 970,510 970,545 953,550"/><polygon points="978,505 995,500 995,530 978,537"/>
          <polygon points="958,625 972,620 972,695 958,698"/><polygon points="978,615 995,608 995,680 978,688"/>
          <polygon points="955,735 972,728 972,803 955,805"/><polygon points="980,725 998,718 998,790 980,797"/>
          <polygon points="1040,482 1055,478 1055,512 1040,515"/><polygon points="1065,475 1080,470 1080,500 1065,505"/>
          <polygon points="1042,590 1055,585 1055,660 1042,662"/><polygon points="1063,583 1078,577 1078,650 1063,655"/>
          <polygon points="1040,700 1055,695 1055,770 1040,772"/><polygon points="1063,692 1080,685 1080,755 1063,760"/>
          <polygon points="1125,452 1138,448 1138,480 1125,484"/><polygon points="1147,445 1161,440 1161,470 1147,475"/>
          <polygon points="1122,560 1135,555 1135,630 1122,632"/><polygon points="1143,552 1160,545 1160,620 1143,625"/>
          <polygon points="1122,665 1135,660 1135,735 1122,738"/><polygon points="1145,657 1160,652 1160,720 1145,727"/>
          <polygon points="720,335 735,330 735,405 720,410"/><polygon points="743,325 760,320 760,393 743,398"/>
          <polygon points="888,277 903,272 903,347 888,350"/><polygon points="912,268 927,262 927,335 912,340"/>
        </g>
        <path d="M327 585V685" stroke="#35b94a" stroke-width="15"/>
        <path d="M318 684h24" stroke="#35b94a" stroke-width="8"/>
        <circle cx="325" cy="530" r="55" fill="url(#leaf)" stroke="#3d7a4a" stroke-width="2"/>
        <path d="M823 0L826 420" stroke="#0000e8" stroke-width="3"/>
      </g>
      <path d="M2672 82L2674 520" stroke="#0000e8" stroke-width="1.200"/>
    </svg>
  </div>
</div>
</body>
</html>
```
FILE: styles.css
```css
* { box-sizing: border-box; }
html, body { margin: 0; padding: 0; }
body {
  width: 3441px; height: 1401px; overflow: hidden; background: #fff;
  font-family: "Open Sans", "Noto Sans", sans-serif; font-size: 14.5px; color: #1a1a1a;
  letter-spacing: -.12px;
}
.defs { position: absolute; }
svg { display: block; flex: none; }
i { display: block; font-style: normal; }

.window { display: flex; width: 3427px; height: 1385px; box-shadow: 0 3px 8px rgba(0,0,0,.55); }
.app { width: 1998px; height: 1385px; flex: none; display: flex; flex-direction: column; border-left: 1px solid #555; border-top: 2px solid #2b4b5a; background: #fff; }

/* title + menu */
.titlebar { height: 42px; display: flex; align-items: center; padding: 0 0 4px 8px; flex: none; }
.appicon { width: 20px; height: 20px; margin-right: 5px; }
.title { white-space: nowrap; }
.winctl { margin-left: auto; display: flex; width: 174px; }
.wc { width: 58px; display: flex; justify-content: center; }
.menubar { height: 22px; flex: none; display: flex; gap: 16px; padding: 1px 0 0 8px; align-items: flex-start; border-bottom: 2px solid #f1f1f1; line-height: 18px; }
.menubar .off { color: #8a8a8a; }

/* ribbon */
.ribbon { height: 103px; flex: none; display: flex; gap: 2px; padding: 1px 0 3px 3px; }
.group { display: flex; flex-direction: column; border: 3px solid #e6e6e6; border-radius: 4px; }
.g1 { width: 611px; } .g2 { width: 393px; } .g3 { width: 355px; }
.ghead { height: 20px; flex: none; background: #d9f0fd; text-align: center; line-height: 21px; }
.gbody { flex: 1; display: flex; align-items: stretch; position: relative; }
.btn { display: flex; flex-direction: column; align-items: center; justify-content: flex-end; white-space: nowrap; padding-bottom: 3px; flex: none; line-height: 20px; }
.btn .ic { margin-bottom: 8px; }
.w-open { width: 59px; } .w-save { width: 78px; } .w-saveas { width: 122px; }
.w-saveas .ic { margin-bottom: 6px; }
.sep { width: 1px; margin: 5px 0 5px 2px; background: #dcdcdc; flex: none; }
.w-upload { width: 150px; }
.w-upload .ic, .w-gexp .ic, .w-gimp .ic, .w-such .ic, .w-hilfe .ic { margin-bottom: 5px; }
.w-druck .ic { margin-bottom: 7px; }
.small { display: flex; flex-direction: column; }
.s1 { padding-top: 4px; gap: 2px; margin-left: 5px; }
.si { display: flex; align-items: center; gap: 2px; height: 20px; white-space: nowrap; }
.w-gexp { width: 100px; } .w-gimp { width: 154px; }
.w-druck { width: 70px; } .w-such { width: 60px; }
.abc { font: 700 15px "Liberation Sans", sans-serif; fill: #5b8fc9; text-anchor: middle; letter-spacing: .3px; }
.active { width: 116px; background: #cde6fd; border: 1px solid #99d1ff; margin: 1px 0 2px -1px; padding-bottom: 0; }
.active .ic { margin-bottom: 7px; }
.w-hilfe { width: 48px; }
.caret { width: 0; height: 0; border: 5px solid transparent; border-top: 8px solid #111; border-bottom: 0; margin: 30px 5px 0 3px; flex: none; }
.s3 { padding-top: 2px; gap: 3px; margin-left: 4px; }

/* panel heads */
.phead { display: flex; align-items: center; height: 27px; flex: none; background: #d9d9d9; border: 1px solid #b5b5b5; border-left: 0; padding-left: 4px; }
.pctl { margin-left: auto; display: flex; align-items: center; gap: 15px; padding-right: 7px; }
.x { font-size: 13px; font-weight: 700; color: #555; line-height: 1; }

/* tasks */
.tasks { flex: none; height: 169px; display: flex; flex-direction: column; border-top: 1px solid #b0b0b0; border-bottom: 2px solid #8a8a8a; }
.tasks .phead { height: 27px; border-top: 0; }
.tasks .pctl { padding-right: 10px; }
.tbody { flex: 1; display: flex; overflow: hidden; padding-top: 2px; }
.tlist { width: 1975px; padding-left: 25px; position: relative; overflow: hidden; }
.bar { height: 24.500px; display: flex; align-items: center; color: #fff; position: relative; }
.bar b { flex: 1; text-align: center; padding-left: 22px; font-weight: 700; letter-spacing: -.12px; font-size: 14.5px; }
.bi { position: absolute; left: 3px; }
.green { background: #76ad41; } .red { background: #ff4f1f; }
.task { height: 24px; display: flex; align-items: center; position: relative; left: -25px; width: 1975px; }
.task i { width: 7px; height: 7px; border-radius: 50%; background: #555; margin: 0 12px 0 35px; }
.tm { width: 937px; }
.cursor { position: absolute; left: 1335px; top: 88px; }
.tscroll { width: 21px; background: #f0f0f0; flex: none; display: flex; flex-direction: column; align-items: center; margin-right: 1px; }
.tscroll .thumb { width: 19px; height: 22px; background: #cdcdcd; margin-top: 0; }
.up, .dn { display: block; width: 8px; height: 8px; border-left: 2px solid #606060; border-top: 2px solid #606060; transform: rotate(45deg); flex: none; }
.tscroll .up { margin: 8px 0 5px; }
.dn { transform: rotate(225deg); margin-top: auto; margin-bottom: 9px; }

/* body */
.body { flex: 1; display: flex; background: #f0f0f0; min-height: 0; }
.leftp { width: 374px; flex: none; margin-top: 6px; display: flex; flex-direction: column; }
.tree { flex: 1; background: #fff; border: 1px solid #a8a8a8; border-width: 1px 1px 0 0; margin-top: 1px; }
.tname { height: 32px; padding: 1px 0 0 6px; line-height: 32px; }
.ti { height: 24px; display: flex; align-items: center; white-space: nowrap; }
.t0 svg { margin: 0 9px 0 0; }
.t1 { margin-left: 50px; padding-left: 5px; }
.t1 svg { margin-right: 7px; }
.t1 span { overflow: hidden; }
.gn { color: #6db04a; } .rd { color: #f0502b; background: #d9d9d9; }
.rd svg { margin-right: 5px; }
.chev { display: inline-block; width: 9px; height: 9px; border-right: 2px solid #555; border-bottom: 2px solid #555; transform: rotate(45deg); flex: none; }
.t0 .chev { margin: -4px 15px 0 9px; }
.t0 .chev.col { transform: rotate(-45deg); border-color: #aaa; margin: 0 15px 0 6px; }

.centerp { width: 1201px; flex: none; margin-left: 8px; display: flex; flex-direction: column; }
.lvtable { margin-top: 8px; height: 1000px; flex: none; display: flex; background: #fff; border: 1px solid #a0a0a0; overflow: hidden; }
.lvmain { width: 1178px; flex: none; }
.r { display: grid; grid-template-columns: 553px repeat(5, 125px); height: 22px; line-height: 21px; white-space: nowrap; }
.hd { height: 31px; line-height: 28px; }
.n { overflow: hidden; text-overflow: clip; padding-left: 5px; }
.l0 { padding-left: 28px; } .l1 { padding-left: 53px; } .l2 { padding-left: 78px; }
.n .chev { width: 8px; height: 8px; margin: 0 8px 3px -17px; display: inline-block; vertical-align: middle; }
.c { border-bottom: 1px solid #c4c4c4; border-left: 1px solid #dcdcdc; padding: 0 3px; overflow: hidden; }
.hd .c { border-bottom: 2px solid #d0d0d0; border-left: 1px solid #e8e8e8; padding-left: 5px; }
.num { text-align: right; }
.price { background: #fffcf0; }
.sec .c { background: #cfcfcf; border-left: 0; border-bottom: 1px solid #bcbcbc; }
.sel .n { margin-left: 75px; padding-left: 3px; background: #cde6fd; }
.sel .c { background: #cde6fd; }
.lvscroll { flex: 1; display: flex; flex-direction: column; align-items: center; background: #f0f0f0; }
.lvscroll .up { margin: 9px 0 6px; }
.lvscroll .thumb { width: 19px; height: 244px; background: #cdcdcd; margin-top: 0; }
.lvfoot { flex: 1; display: flex; align-items: center; gap: 3px; padding-top: 8px; }
.inp { width: 150px; height: 25px; background: #f0f0f0; border: 1px solid #dcdcdc; color: #8a8a8a; text-align: right; padding-right: 4px; line-height: 23px; }
.spring { flex: 1; }
.vtog { display: flex; gap: 2px; background: #e6e6e6; border: 1px solid #ddd; padding: 1px 6px 0; height: 27px; margin-left: 1px; }
.vb { width: 25px; height: 24px; display: flex; align-items: center; justify-content: center; background: #d2d2d2; border: 1px solid #b5b5b5; }
.on { background: #cde6fd; border: 1px solid #0f63a8; }

.rightp { width: 405px; flex: none; margin-left: 9px; margin-top: 6px; display: flex; flex-direction: column; }
.rightp .phead { border-left: 1px solid #b5b5b5; border-right: 0; }
.rightp .pctl { padding-right: 8px; }
.details { flex: 1; background: #fff; border-left: 1px solid #a8a8a8; border-top: 1px solid #a8a8a8; margin-top: 1px; }
.dr { display: grid; grid-template-columns: 119px 1fr; border-bottom: 1px solid #dcdcdc; }
.dk { padding-left: 22px; display: flex; align-items: center; white-space: nowrap; border-right: 1px solid #e2e2e2; }
.dv { padding: 0 4px 0 3px; display: flex; align-items: center; line-height: 20px; }
.ctr { justify-content: center; }
.dh { height: 31px; border-bottom: 0; }
.h-s { height: 28px; } .h-d { height: 43px; } .h-m { height: 30px; }
.dbtn { flex: 1; height: 26px; background: #e1e1e1; border: 1px solid #adadad; text-align: center; line-height: 24px; }
.dsec { height: 30px; background: #bfbfbf; display: flex; align-items: center; }
.dsec i { width: 0; height: 0; border: 6px solid transparent; border-top: 9px solid #111; border-bottom: 0; margin: 0 9px 0 3px; }

/* viewer */
.viewer { width: 1429px; flex: none; height: 1385px; border-left: 3px solid #1b5a8a; border-right: 1px solid #444; border-bottom: 1px solid #444; background: #e3e3fc; display: flex; flex-direction: column; overflow: hidden; }
.vtitle { height: 35px; flex: none; background: #fff; color: #9a9a9a; padding-left: 7px; line-height: 34px; }
.vtools { height: 47px; flex: none; background: #efefef; display: flex; justify-content: center; align-items: center; gap: 10px; padding-bottom: 7px; }
.scene { flex: none; }
.sign { font: 700 62px "Liberation Sans", sans-serif; fill: none; stroke: #f2c500; stroke-width: 2; letter-spacing: 6px; }
```
